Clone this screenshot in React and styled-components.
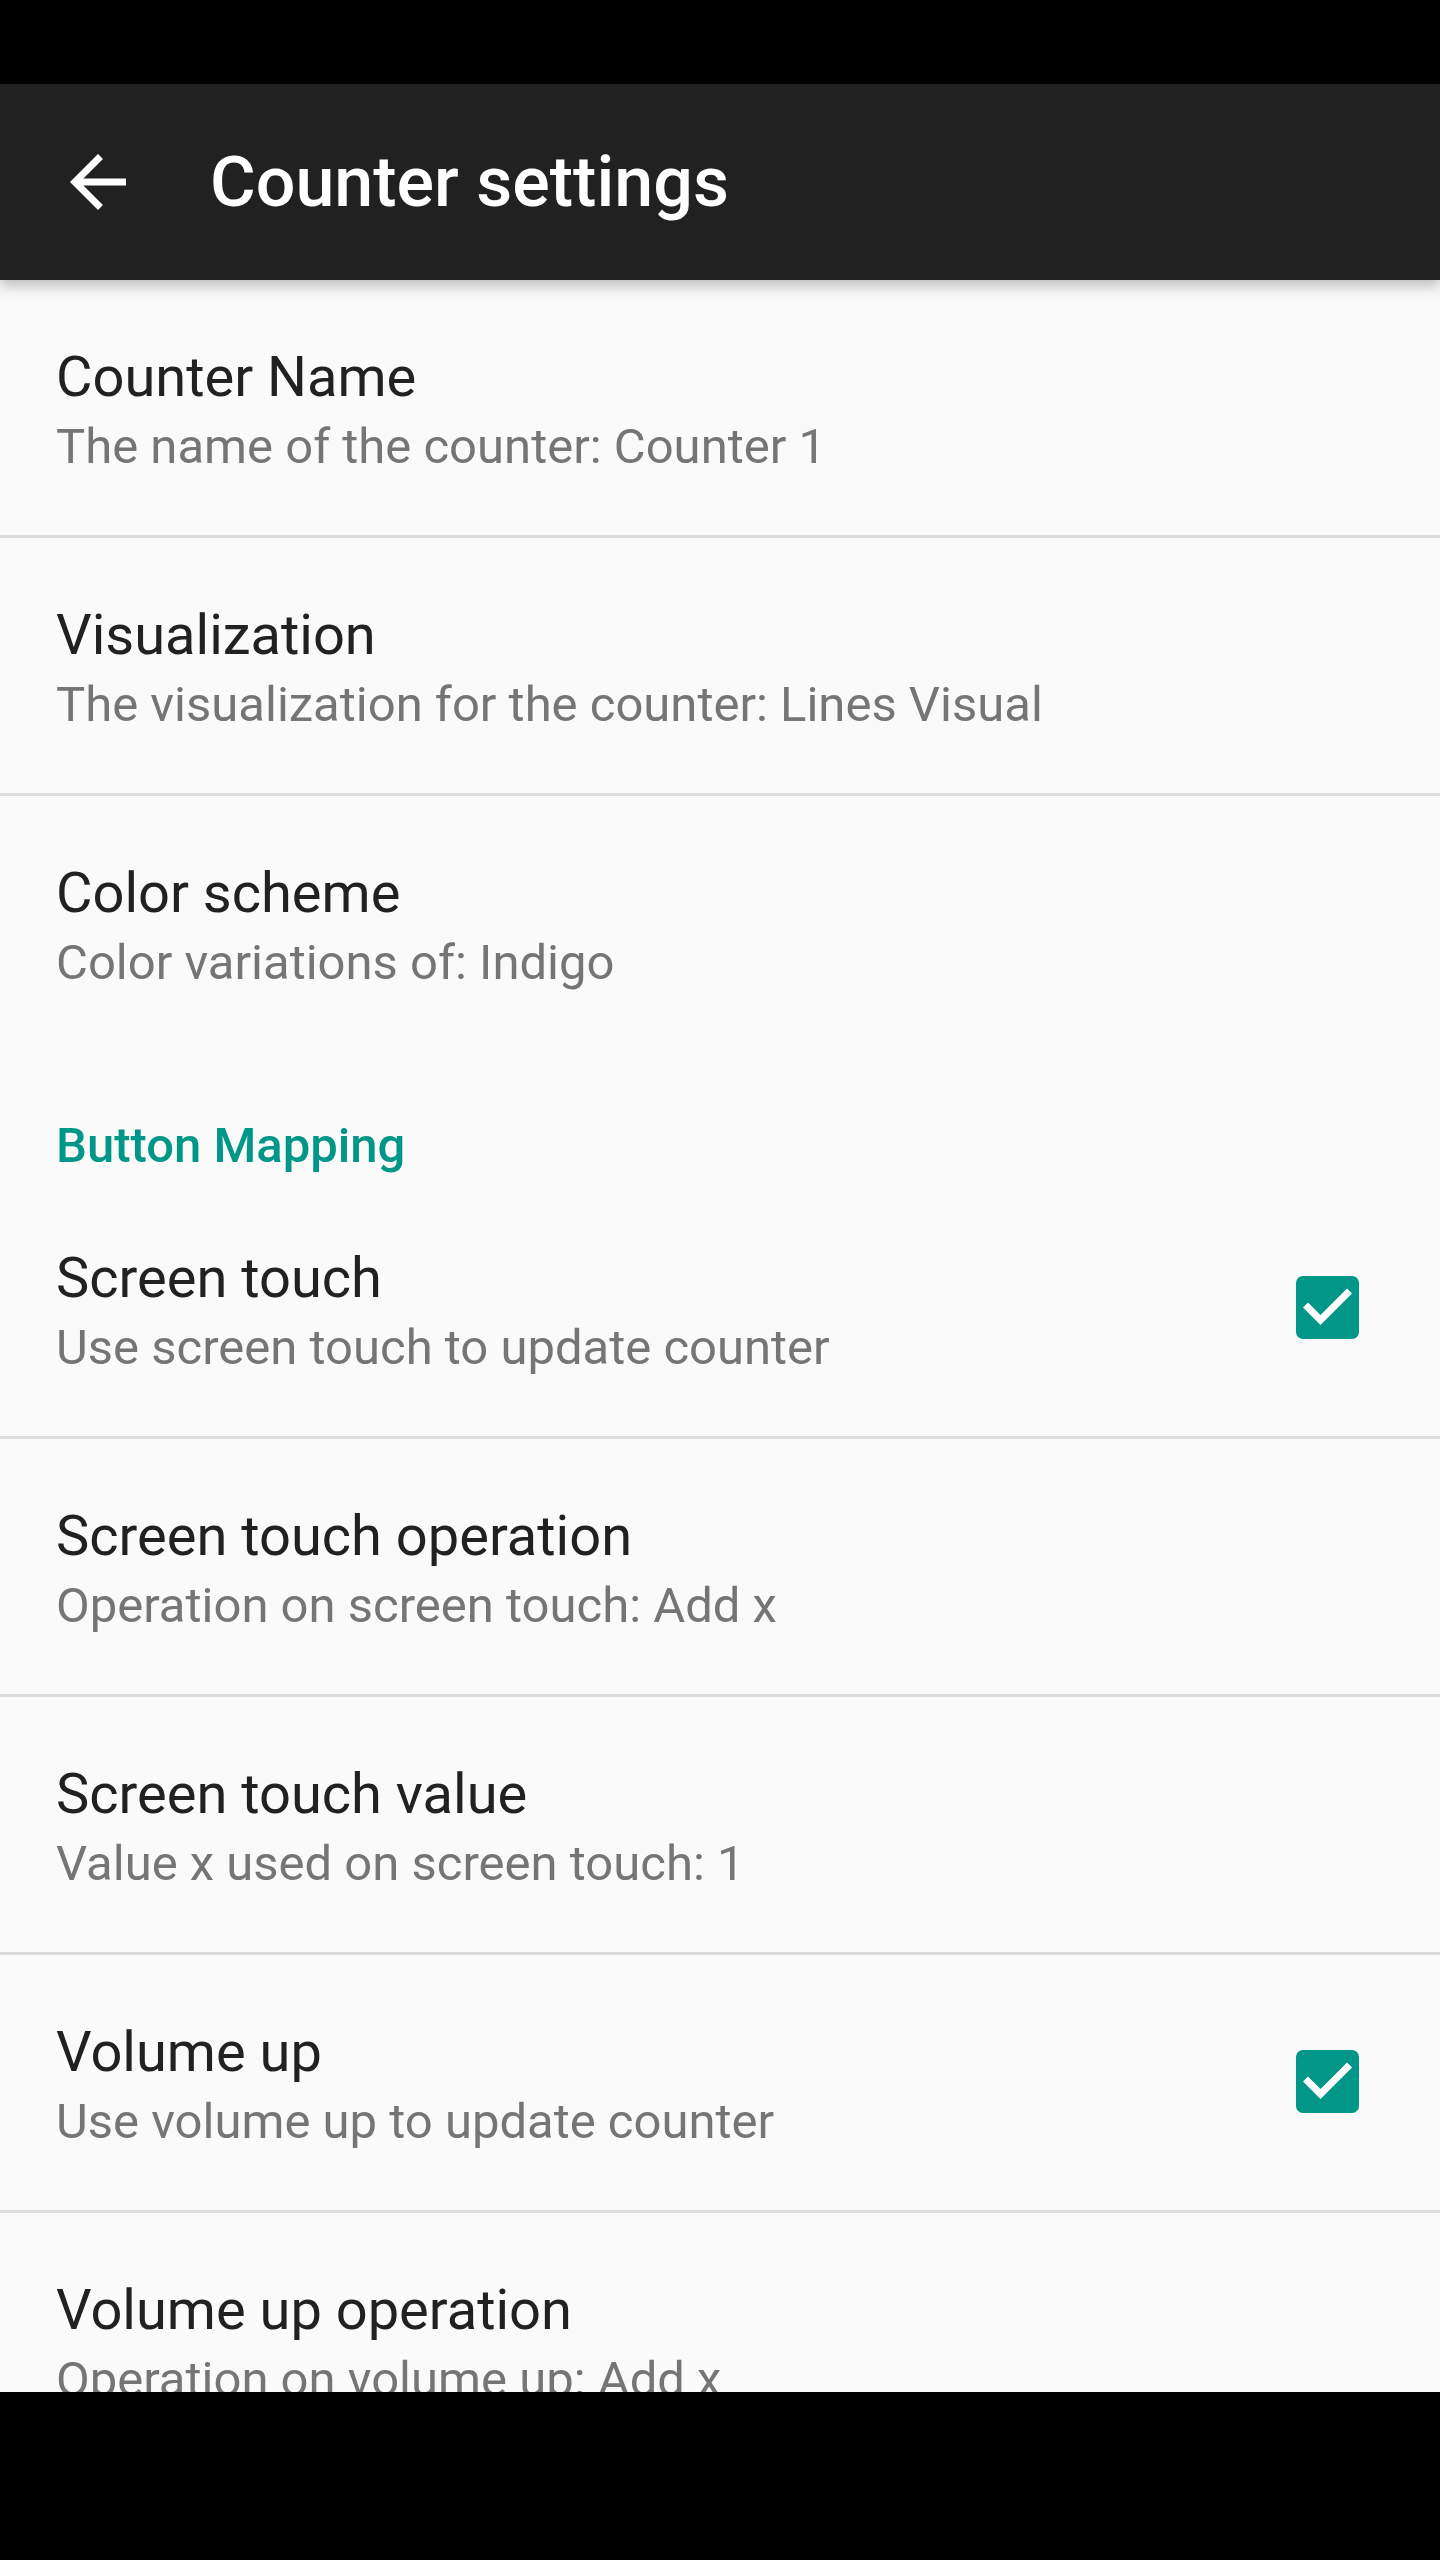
import React from 'react';
import styled, { createGlobalStyle } from 'styled-components';

const GlobalStyle = createGlobalStyle`
    html, body {
        margin: 0;
        padding: 0;
        background: #000;
        font-family: Roboto, "Noto Sans", sans-serif;
    }
`;

const prefs = [
    { title: 'Counter Name', summary: 'The name of the counter: Counter 1', divider: true },
    { title: 'Visualization', summary: 'The visualization for the counter: Lines Visual', divider: true },
    { title: 'Color scheme', summary: 'Color variations of: Indigo' },
    { category: 'Button Mapping' },
    { title: 'Screen touch', summary: 'Use screen touch to update counter', checked: true, divider: true },
    { title: 'Screen touch operation', summary: 'Operation on screen touch: Add x', divider: true },
    { title: 'Screen touch value', summary: 'Value x used on screen touch: 1', divider: true },
    { title: 'Volume up', summary: 'Use volume up to update counter', checked: true, divider: true },
    { title: 'Volume up operation', summary: 'Operation on volume up: Add x', divider: true },
];

function BackArrow() {
    return (
        <svg width="84" height="84" viewBox="0 0 24 24">
            <path fill="#fff" d="M20 11H7.83l5.59-5.59L12 4l-8 8 8 8 1.41-1.41L7.83 13H20v-2z" />
        </svg>
    );
}

function CheckBox() {
    return (
        <svg width="63" height="63" viewBox="3 3 18 18">
            <rect x="3" y="3" width="18" height="18" rx="2" fill="#009688" />
            <path fill="#fff" d="M10 17l-5-5 1.41-1.41L10 14.17l7.59-7.59L19 8z" />
        </svg>
    );
}

function App() {
    return (
        <Screen>
            <GlobalStyle />
            <StatusBar />
            <Toolbar>
                <NavButton><BackArrow /></NavButton>
                <Title>Counter settings</Title>
            </Toolbar>
            <Content>
                {prefs.map((p, i) =>
                    p.category ? (
                        <Category key={i}>{p.category}</Category>
                    ) : (
                        <Item key={i} $divider={p.divider}>
                            <Texts>
                                <ItemTitle>{p.title}</ItemTitle>
                                <Summary>{p.summary}</Summary>
                            </Texts>
                            {p.checked && <Widget><CheckBox /></Widget>}
                        </Item>
                    )
                )}
            </Content>
            <NavBar />
        </Screen>
    );
}

const Screen = styled.div`
    width: 1440px;
    height: 2560px;
    display: flex;
    flex-direction: column;
    background: #fafafa;
    overflow: hidden;
`;

const StatusBar = styled.div`
    height: 84px;
    flex-shrink: 0;
    background: #000;
`;

const Toolbar = styled.div`
    height: 196px;
    flex-shrink: 0;
    display: flex;
    align-items: center;
    background: #212121;
    position: relative;
    z-index: 2;
    box-shadow: 0 5px 14px rgba(0, 0, 0, 0.28);
`;

const NavButton = styled.div`
    width: 196px;
    height: 196px;
    display: flex;
    align-items: center;
    justify-content: center;
`;

const Title = styled.h1`
    margin: 0 0 0 14px;
    color: #fff;
    font-size: 70px;
    font-weight: 500;
    line-height: 82px;
`;

const Content = styled.div`
    height: 2112px;
    flex-shrink: 0;
    overflow: hidden;
    background: #fafafa;
`;

const Item = styled.div`
    display: flex;
    align-items: center;
    height: 255px;
    padding: 0 0 0 56px;
    border-bottom: ${p => (p.$divider ? '3px solid #dcdcdc' : 'none')};
`;

const Texts = styled.div`
    flex: 1;
    display: flex;
    flex-direction: column;
    padding-top: 4px;
`;

const ItemTitle = styled.div`
    color: #212121;
    font-size: 56px;
    line-height: 66px;
`;

const Summary = styled.div`
    margin-top: 8px;
    color: #757575;
    font-size: 49px;
    line-height: 58px;
`;

const Widget = styled.div`
    display: flex;
    margin-right: 81px;
    margin-top: -2px;
`;

const Category = styled.div`
    height: 130px;
    box-sizing: border-box;
    padding: 66px 0 0 56px;
    color: #009688;
    font-size: 49px;
    font-weight: 500;
    line-height: 57px;
`;

const NavBar = styled.div`
    height: 168px;
    flex-shrink: 0;
    background: #000;
`;

export default App;
